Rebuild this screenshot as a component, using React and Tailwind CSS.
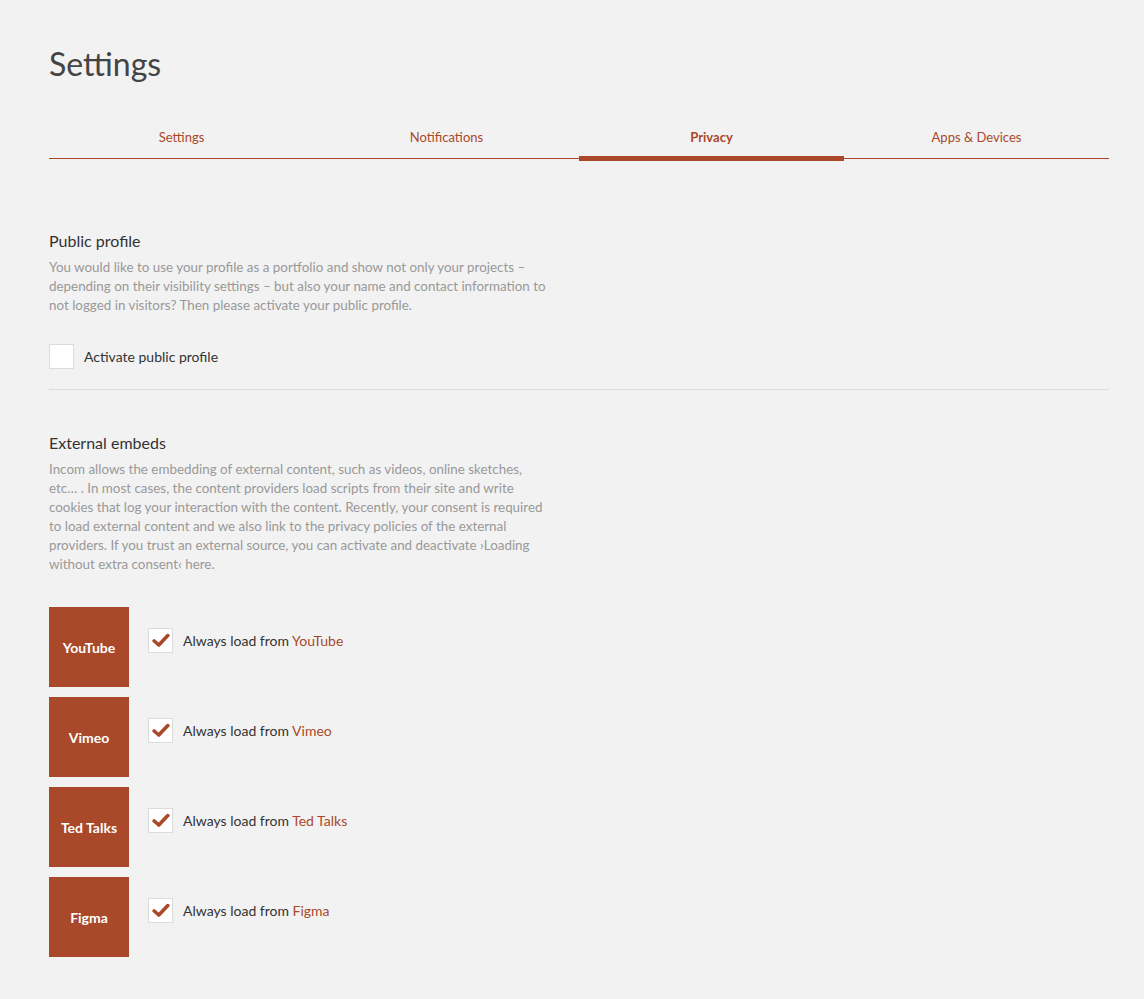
import { useState } from "react";

const tabs = ["Settings", "Notifications", "Privacy", "Apps & Devices"];
const providers = ["YouTube", "Vimeo", "Ted Talks", "Figma"];

function Check({ checked, onClick }) {
  return (
    <button
      type="button"
      onClick={onClick}
      className="flex h-[25px] w-[25px] shrink-0 items-center justify-center border border-[#dcdcdc] bg-white"
    >
      {checked && (
        <svg width="18" height="15" viewBox="0 0 18 15">
          <path d="M2.2 8 L6.8 12 L15.8 2.6" fill="none" stroke="#a9492a" strokeWidth="3.6" strokeLinecap="round" strokeLinejoin="round" />
        </svg>
      )}
    </button>
  );
}

export default function App() {
  const [active, setActive] = useState("Privacy");
  const [publicProfile, setPublicProfile] = useState(false);
  const [loads, setLoads] = useState({ YouTube: true, Vimeo: true, "Ted Talks": true, Figma: true });

  return (
    <div className="min-h-screen bg-[#f2f2f2] pl-[49px] pr-[35px] pt-[44px] pb-[40px] font-['Lato',sans-serif] text-[#333]">
      <h1 className="text-[32px] leading-[40px] text-[#444]">Settings</h1>

      {/* tabs */}
      <div className="mt-[34px] grid grid-cols-4 border-b border-[#a9492a]">
        {tabs.map((t) => (
          <button
            key={t}
            onClick={() => setActive(t)}
            className={`relative h-[40px] text-[13px] text-[#a9492a] ${active === t ? "font-bold" : ""}`}
          >
            {t}
            {active === t && <span className="absolute left-0 right-0 bottom-[-3px] h-[5px] bg-[#a9492a]" />}
          </button>
        ))}
      </div>

      {/* public profile */}
      <section className="mt-[72px] border-b border-[#dddddd] pb-[20px]">
        <h2 className="text-[16px] leading-[20px] text-[#333]">Public profile</h2>
        <p className="mt-[7px] w-[503px] text-[13.4px] leading-[19px] text-[#999]">
          You would like to use your profile as a portfolio and show not only your projects – depending on their visibility settings – but also your name and contact information to not logged in visitors? Then please activate your public profile.
        </p>
        <label className="mt-[29px] flex items-center gap-[10px]">
          <button
            type="button"
            onClick={() => setPublicProfile(!publicProfile)}
            className="h-[25px] w-[25px] border border-[#dcdcdc] bg-white"
          />
          <span className="text-[14px] text-[#333]">Activate public profile</span>
        </label>
      </section>

      {/* external embeds */}
      <section className="mt-[43px]">
        <h2 className="text-[16px] leading-[20px] text-[#333]">External embeds</h2>
        <p className="mt-[7px] w-[503px] text-[13.4px] leading-[19px] text-[#999]">
          Incom allows the embedding of external content, such as videos, online sketches, etc… . In most cases, the content providers load scripts from their site and write cookies that log your interaction with the content. Recently, your consent is required to load external content and we also link to the privacy policies of the external providers. If you trust an external source, you can activate and deactivate ›Loading without extra consent‹ here.
        </p>
        <div className="mt-[33px] flex flex-col gap-[10px]">
          {providers.map((p) => (
            <div key={p} className="flex items-start gap-[19px]">
              <div className="flex h-[80px] w-[80px] items-center justify-center bg-[#a9492a] text-[14px] font-bold text-white">
                {p}
              </div>
              <div className="mt-[21px] flex items-center gap-[10px]">
                <Check checked={loads[p]} onClick={() => setLoads({ ...loads, [p]: !loads[p] })} />
                <span className="text-[14px] text-[#333]">
                  Always load from <a className="text-[#a9492a]">{p}</a>
                </span>
              </div>
            </div>
          ))}
        </div>
      </section>
    </div>
  );
}
